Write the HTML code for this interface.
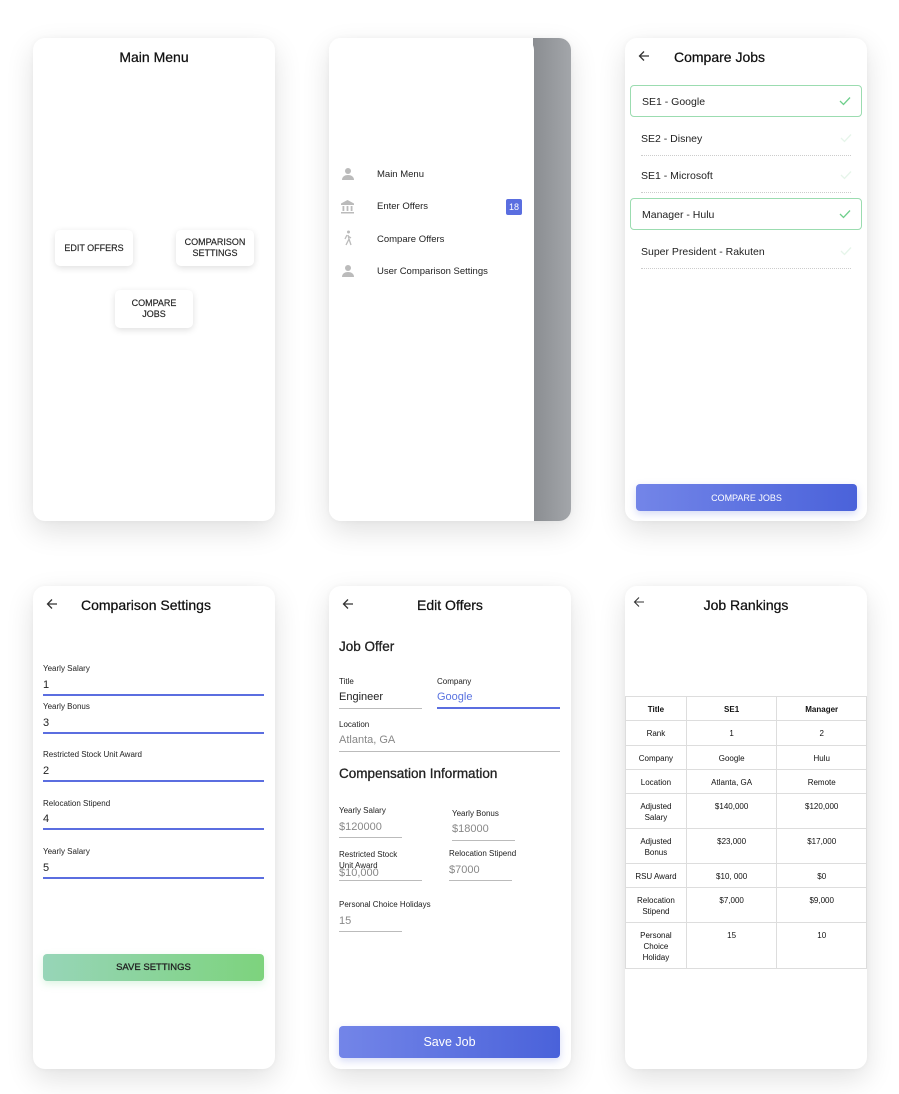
<!DOCTYPE html>
<html><head><meta charset="utf-8"><style>
*{margin:0;padding:0;box-sizing:border-box}
body{width:899px;height:1094px;background:#fff;position:relative;overflow:hidden;font-family:"Liberation Sans",Arial,sans-serif;color:#222}
.card{position:absolute;width:242px;height:483px;background:#fff;border-radius:12px;box-shadow:0 10px 28px rgba(0,0,0,0.12),0 0 6px rgba(0,0,0,0.04);overflow:hidden}
.a{position:absolute}
.t{font-size:14px;color:#111;-webkit-text-stroke:0.25px #111}
.btn{position:absolute;background:#fff;border-radius:5px;box-shadow:0 2px 7px rgba(0,0,0,0.13);font-size:9px;text-align:center;display:flex;align-items:center;justify-content:center;line-height:11px;color:#222;-webkit-text-stroke:0.15px #222}
.lbl{position:absolute;font-size:8px;color:#222}
.val{position:absolute;font-size:11px;color:#222}
.ul{position:absolute;height:1px;background:#bbb}
.blue{background:#5b6ee0;height:1.5px}
.row{position:absolute;left:5px;width:232px;height:32px;font-size:10.5px;color:#222;padding-left:11px;line-height:32px}
.row.sel{border:1px solid #9bdcb0;border-radius:4px}
.row.un:after{content:"";position:absolute;left:11px;right:11px;bottom:-1px;border-bottom:1px dotted #ccc}
.chk{position:absolute;right:10px;top:10px}
table{position:absolute;border-collapse:collapse;font-size:8px;text-align:center;color:#111}
td{border:1px solid #ddd;vertical-align:top;padding-top:7px;line-height:11px}
.gbtn{position:absolute;border-radius:4px;display:flex;align-items:center;justify-content:center;box-shadow:0 3px 8px rgba(90,110,220,0.25)}
.d{font-size:9.5px}
</style></head><body>

<div class="card" style="left:33px;top:38px">
  <div class="a t" style="left:0;width:242px;text-align:center;top:11px">Main Menu</div>
  <div class="btn" style="left:22px;top:192px;width:78px;height:36px">EDIT OFFERS</div>
  <div class="btn" style="left:143px;top:192px;width:78px;height:36px">COMPARISON<br>SETTINGS</div>
  <div class="btn" style="left:82px;top:252px;width:78px;height:38px">COMPARE<br>JOBS</div>
</div>

<div class="card" style="left:329px;top:38px;background:linear-gradient(90deg,#fff 0,#fff 204px,#8a8d91 204px,#a3a6aa 242px)">
  <div class="a" style="left:0;top:0;width:205px;height:483px;background:#fff;border-radius:0 12px 0 0"></div>
  <svg class="a" style="left:12px;top:129px" width="14" height="14" viewBox="0 0 14 14"><circle cx="7" cy="4" r="3" fill="#bbb"/><path d="M1 13c0-3.5 3-5 6-5s6 1.5 6 5z" fill="#bbb"/></svg>
  <div class="a d" style="left:48px;top:131px">Main Menu</div>
  <svg class="a" style="left:11px;top:161px" width="15" height="15" viewBox="0 0 15 15"><path d="M7.5 1L1 4.5v1.5h13V4.5z" fill="#bbb"/><rect x="2.5" y="7" width="1.8" height="5" fill="#bbb"/><rect x="6.6" y="7" width="1.8" height="5" fill="#bbb"/><rect x="10.7" y="7" width="1.8" height="5" fill="#bbb"/><rect x="1" y="13" width="13" height="1.5" fill="#bbb"/></svg>
  <div class="a d" style="left:48px;top:163px">Enter Offers</div>
  <div class="a" style="left:177px;top:161px;width:16px;height:16px;border-radius:2px;background:#5a6ee0;color:#fff;font-size:9px;text-align:center;line-height:16px">18</div>
  <svg class="a" style="left:12px;top:192px" width="14" height="16" viewBox="0 0 14 16"><circle cx="7.5" cy="2" r="1.5" fill="#bbb"/><path d="M6 5l-2 4M7 5l1 4l-3 6M8 9l2 6M7 6l3 2" stroke="#bbb" stroke-width="1.3" fill="none"/></svg>
  <div class="a d" style="left:48px;top:196px">Compare Offers</div>
  <svg class="a" style="left:12px;top:226px" width="14" height="14" viewBox="0 0 14 14"><circle cx="7" cy="4" r="3" fill="#bbb"/><path d="M1 13c0-3.5 3-5 6-5s6 1.5 6 5z" fill="#bbb"/></svg>
  <div class="a d" style="left:48px;top:228px">User Comparison Settings</div>
</div>

<div class="card" style="left:625px;top:38px">
  <svg class="a" style="left:13px;top:12px" width="12" height="12" viewBox="0 0 12 12"><path d="M11 6H1.5M6 1.5L1.5 6L6 10.5" stroke="#333" stroke-width="1.3" fill="none"/></svg>
  <div class="a t" style="left:49px;top:11px">Compare Jobs</div>
  <div class="row sel" style="top:47px">SE1 - Google<svg class="chk" width="12" height="10" viewBox="0 0 12 10"><path d="M1 5l3.5 3.5L11 1.5" stroke="#6fcf8c" stroke-width="1.3" fill="none"/></svg></div>
  <div class="row un" style="top:85px">SE2 - Disney<svg class="chk" width="12" height="10" viewBox="0 0 12 10"><path d="M1 5l3.5 3.5L11 1.5" stroke="#e6f5ea" stroke-width="1.3" fill="none"/></svg></div>
  <div class="row un" style="top:122px">SE1 - Microsoft<svg class="chk" width="12" height="10" viewBox="0 0 12 10"><path d="M1 5l3.5 3.5L11 1.5" stroke="#e6f5ea" stroke-width="1.3" fill="none"/></svg></div>
  <div class="row sel" style="top:160px">Manager - Hulu<svg class="chk" width="12" height="10" viewBox="0 0 12 10"><path d="M1 5l3.5 3.5L11 1.5" stroke="#6fcf8c" stroke-width="1.3" fill="none"/></svg></div>
  <div class="row un" style="top:198px">Super President - Rakuten<svg class="chk" width="12" height="10" viewBox="0 0 12 10"><path d="M1 5l3.5 3.5L11 1.5" stroke="#e6f5ea" stroke-width="1.3" fill="none"/></svg></div>
  <div class="gbtn" style="left:11px;top:446px;width:221px;height:27px;background:linear-gradient(90deg,#7385e8,#4a62da);color:#fff;font-size:9px">COMPARE JOBS</div>
</div>

<div class="card" style="left:33px;top:586px">
  <svg class="a" style="left:13px;top:12px" width="12" height="12" viewBox="0 0 12 12"><path d="M11 6H1.5M6 1.5L1.5 6L6 10.5" stroke="#333" stroke-width="1.3" fill="none"/></svg>
  <div class="a t" style="left:48px;top:11px">Comparison Settings</div>
  <div class="lbl" style="left:10px;top:78px">Yearly Salary</div><div class="val" style="left:10px;top:93px">1</div><div class="ul blue" style="left:10px;top:108px;width:221px"></div>
  <div class="lbl" style="left:10px;top:116px">Yearly Bonus</div><div class="val" style="left:10px;top:131px">3</div><div class="ul blue" style="left:10px;top:146px;width:221px"></div>
  <div class="lbl" style="left:10px;top:164px">Restricted Stock Unit Award</div><div class="val" style="left:10px;top:179px">2</div><div class="ul blue" style="left:10px;top:194px;width:221px"></div>
  <div class="lbl" style="left:10px;top:213px">Relocation Stipend</div><div class="val" style="left:10px;top:227px">4</div><div class="ul blue" style="left:10px;top:242px;width:221px"></div>
  <div class="lbl" style="left:10px;top:261px">Yearly Salary</div><div class="val" style="left:10px;top:276px">5</div><div class="ul blue" style="left:10px;top:291px;width:221px"></div>
  <div class="gbtn" style="left:10px;top:368px;width:221px;height:27px;background:linear-gradient(90deg,#97d5b8,#7dd37d);color:#222;font-size:9.5px;-webkit-text-stroke:0.3px #222;box-shadow:0 3px 8px rgba(120,210,140,0.25)">SAVE SETTINGS</div>
</div>

<div class="card" style="left:329px;top:586px">
  <svg class="a" style="left:13px;top:12px" width="12" height="12" viewBox="0 0 12 12"><path d="M11 6H1.5M6 1.5L1.5 6L6 10.5" stroke="#333" stroke-width="1.3" fill="none"/></svg>
  <div class="a t" style="left:0;width:242px;text-align:center;top:11px">Edit Offers</div>
  <div class="a" style="left:10px;top:53px;font-size:13.5px;-webkit-text-stroke:0.3px #222">Job Offer</div>
  <div class="lbl" style="left:10px;top:91px">Title</div><div class="val" style="left:10px;top:105px">Engineer</div><div class="ul" style="left:10px;top:122px;width:83px"></div>
  <div class="lbl" style="left:108px;top:91px">Company</div><div class="val" style="left:108px;top:105px;color:#5a73e0">Google</div><div class="ul blue" style="left:108px;top:121px;width:123px"></div>
  <div class="lbl" style="left:10px;top:134px">Location</div><div class="val" style="left:10px;top:148px;color:#888">Atlanta, GA</div><div class="ul" style="left:10px;top:165px;width:221px"></div>
  <div class="a" style="left:10px;top:180px;font-size:13.5px;-webkit-text-stroke:0.3px #222">Compensation Information</div>
  <div class="lbl" style="left:10px;top:220px">Yearly Salary</div><div class="val" style="left:10px;top:235px;color:#888">$120000</div><div class="ul" style="left:10px;top:251px;width:63px"></div>
  <div class="lbl" style="left:123px;top:223px">Yearly Bonus</div><div class="val" style="left:123px;top:237px;color:#888">$18000</div><div class="ul" style="left:123px;top:254px;width:63px"></div>
  <div class="lbl" style="left:10px;top:263px;line-height:11px">Restricted Stock<br>Unit Award</div><div class="val" style="left:10px;top:281px;color:#888">$10,000</div><div class="ul" style="left:10px;top:294px;width:83px"></div>
  <div class="lbl" style="left:120px;top:263px">Relocation Stipend</div><div class="val" style="left:120px;top:278px;color:#888">$7000</div><div class="ul" style="left:120px;top:294px;width:63px"></div>
  <div class="lbl" style="left:10px;top:314px">Personal Choice Holidays</div><div class="val" style="left:10px;top:329px;color:#888">15</div><div class="ul" style="left:10px;top:345px;width:63px"></div>
  <div class="gbtn" style="left:10px;top:440px;width:221px;height:32px;background:linear-gradient(90deg,#7385e8,#4a62da);color:#fff;font-size:12.5px">Save Job</div>
</div>

<div class="card" style="left:625px;top:586px">
  <svg class="a" style="left:8px;top:10px" width="12" height="12" viewBox="0 0 12 12"><path d="M11 6H1.5M6 1.5L1.5 6L6 10.5" stroke="#333" stroke-width="1.1" fill="none"/></svg>
  <div class="a t" style="left:0;width:242px;text-align:center;top:11px">Job Rankings</div>
  <table style="left:0;top:110px;width:242px">
    <colgroup><col style="width:61px"><col style="width:91px"><col style="width:90px"></colgroup>
    <tr style="height:24px;font-weight:bold"><td>Title</td><td>SE1</td><td>Manager</td></tr>
    <tr style="height:25px"><td>Rank</td><td>1</td><td>2</td></tr>
    <tr style="height:24px"><td>Company</td><td>Google</td><td>Hulu</td></tr>
    <tr style="height:24px"><td>Location</td><td>Atlanta, GA</td><td>Remote</td></tr>
    <tr style="height:35px"><td>Adjusted<br>Salary</td><td>$140,000</td><td>$120,000</td></tr>
    <tr style="height:35px"><td>Adjusted<br>Bonus</td><td>$23,000</td><td>$17,000</td></tr>
    <tr style="height:24px"><td>RSU Award</td><td>$10, 000</td><td>$0</td></tr>
    <tr style="height:35px"><td>Relocation<br>Stipend</td><td>$7,000</td><td>$9,000</td></tr>
    <tr style="height:46px"><td>Personal<br>Choice<br>Holiday</td><td>15</td><td>10</td></tr>
  </table>
</div>
</body></html>
